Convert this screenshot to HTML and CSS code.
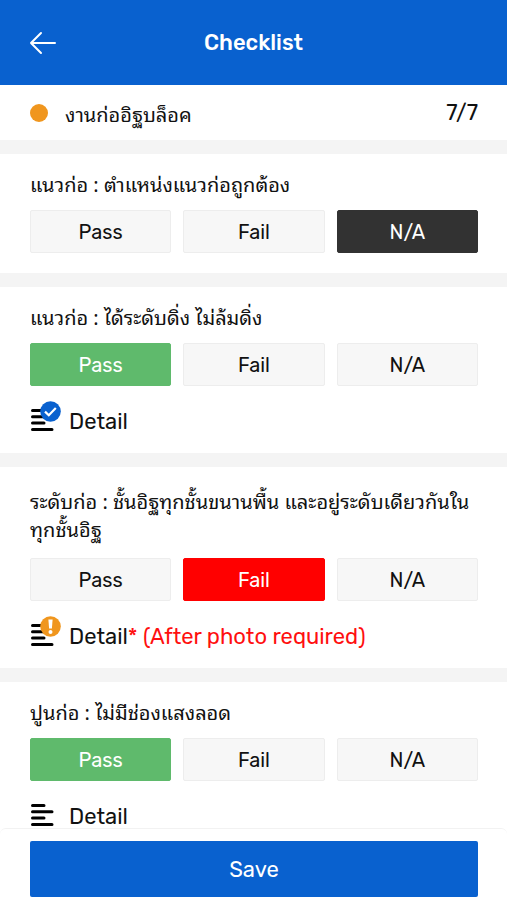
FILE: index.html
```html
<!DOCTYPE html>
<html lang="th">
<head>
<meta charset="utf-8">
<meta name="viewport" content="width=device-width, initial-scale=1">
<title>Checklist</title>
<link rel="stylesheet" href="styles.css">
</head>
<body>
<header class="topbar">
  <button class="back" type="button" aria-label="Back">
    <svg width="28" height="24" viewBox="0 0 28 24" fill="none" stroke="currentColor" stroke-width="2" stroke-linecap="round" stroke-linejoin="round"><path d="M26 12H2M12 2L2 12l10 10"/></svg>
  </button>
  <h1 class="title">Checklist</h1>
</header>
<main class="list">
  <section class="summary">
    <span class="dot"></span>
    <h2 class="question">งานก่ออิฐบล็อค</h2>
    <span class="count">7/7</span>
  </section>

  <section class="item">
    <h2 class="question">แนวก่อ : ตำแหน่งแนวก่อถูกต้อง</h2>
    <div class="choices">
      <button class="choice" type="button">Pass</button>
      <button class="choice" type="button">Fail</button>
      <button class="choice na" type="button">N/A</button>
    </div>
  </section>

  <section class="item">
    <h2 class="question">แนวก่อ : ได้ระดับดิ่ง ไม่ล้มดิ่ง</h2>
    <div class="choices">
      <button class="choice pass" type="button">Pass</button>
      <button class="choice" type="button">Fail</button>
      <button class="choice" type="button">N/A</button>
    </div>
    <button class="detail" type="button">
      <svg width="32" height="32" viewBox="0 0 32 32"><path d="M2.5 9.5H14M2.5 15.8H22M2.5 22.1H14M2.5 28.4H22" stroke="#000" stroke-width="3" stroke-linecap="round"/><circle cx="20.5" cy="10.5" r="10.3" fill="#0961cf"/><path d="M15 10.6l3.8 3.7 7-7.2" fill="none" stroke="#fff" stroke-width="2.2"/></svg>
      <span class="label">Detail</span>
    </button>
  </section>

  <section class="item long">
    <h2 class="question">ระดับก่อ : ชั้นอิฐทุกชั้นขนานพื้น และอยู่ระดับเดียวกันใน<wbr><span class="phrase">ทุกชั้นอิฐ</span></h2>
    <div class="choices">
      <button class="choice" type="button">Pass</button>
      <button class="choice fail" type="button">Fail</button>
      <button class="choice" type="button">N/A</button>
    </div>
    <button class="detail" type="button">
      <svg width="32" height="32" viewBox="0 0 32 32"><path d="M2.5 9.5H14M2.5 15.8H22M2.5 22.1H14M2.5 28.4H22" stroke="#000" stroke-width="3" stroke-linecap="round"/><circle cx="20.5" cy="10.5" r="10.3" fill="#f0961e"/><path d="M18.4 3.4h4.2l-.7 9.2h-2.8z" fill="#fff"/><circle cx="20.5" cy="16" r="2" fill="#fff"/></svg>
      <span class="label">Detail<span class="required">* (After photo required)</span></span>
    </button>
  </section>

  <section class="item">
    <h2 class="question">ปูนก่อ : ไม่มีช่องแสงลอด</h2>
    <div class="choices">
      <button class="choice pass" type="button">Pass</button>
      <button class="choice" type="button">Fail</button>
      <button class="choice" type="button">N/A</button>
    </div>
    <button class="detail" type="button">
      <svg width="32" height="32" viewBox="0 0 32 32"><path d="M2.5 9.5H14M2.5 15.8H22M2.5 22.1H14M2.5 28.4H22" stroke="#000" stroke-width="3" stroke-linecap="round"/></svg>
      <span class="label">Detail</span>
    </button>
  </section>
</main>
<footer class="actions">
  <button class="save" type="button">Save</button>
</footer>
</body>
</html>
```
FILE: styles.css
```css
* { box-sizing: border-box; }

body {
  margin: 0;
  height: 100vh;
  display: flex;
  flex-direction: column;
  background: #fff;
  color: #111;
  font-family: Rubik, Roboto, "Noto Sans", sans-serif;
  font-size: 20px;
}

button {
  font: inherit;
  color: inherit;
  padding: 0;
  border: 0;
  background: none;
  cursor: pointer;
}

.topbar {
  flex: none;
  display: grid;
  grid-template-columns: 28px 1fr 28px;
  align-items: center;
  padding: 30px 29px;
  background: #0961cf;
  color: #fff;
}

.back { display: flex; }

.title {
  margin: 0;
  font-size: 22px;
  line-height: 25px;
  font-weight: 500;
  text-align: center;
}

.list {
  flex: 1;
  min-height: 0;
  overflow: hidden;
  display: flex;
  flex-direction: column;
  gap: 14px;
  background: #f4f4f4;
}

.summary,
.item {
  flex: none;
  background: #fff;
  padding: 0 29px 0 30px;
}

.summary {
  display: flex;
  align-items: center;
  gap: 17px;
  height: 55px;
}

.dot {
  width: 18px;
  height: 18px;
  border-radius: 50%;
  background: #f0961e;
}

.count {
  margin-left: auto;
  font-size: 22px;
}

.item {
  padding-top: 15px;
  padding-bottom: 20px;
}

.long { padding-top: 19px; }

.question {
  margin: 0;
  font-family: "Noto Sans Thai Looped", "Noto Looped Thai", Sarabun, Loma, Garuda, Waree, Rubik, "Noto Sans", sans-serif;
  font-size: 20px;
  line-height: 28px;
  font-weight: 400;
}

.phrase { display: inline-block; }

.choices {
  display: grid;
  grid-template-columns: repeat(3, 1fr);
  gap: 12px;
  margin-top: 13px;
}

.long .choices { margin-top: 16px; }

.choice {
  height: 43px;
  border: 1px solid #ededed;
  border-radius: 2px;
  background: #f7f7f7;
}

.pass { background: #5fba6c; border-color: #5fba6c; color: #fff; }
.fail { background: #f00; border-color: #f00; color: #fff; }
.na { background: #323232; border-color: #323232; color: #fff; }

.detail {
  display: flex;
  align-items: flex-end;
  gap: 7px;
  margin-top: 15px;
  font-size: 22px;
  text-align: left;
}

.label { line-height: 22px; }

.required { color: #ff0f0f; }

.actions {
  flex: none;
  padding: 12px 29px 3px 30px;
  border-top: 1px solid #f2f2f2;
  border-radius: 6px 6px 0 0;
  background: #fff;
}

.save {
  width: 100%;
  height: 56px;
  border-radius: 2px;
  background: #0961cf;
  color: #fff;
  font-size: 22px;
}
```
